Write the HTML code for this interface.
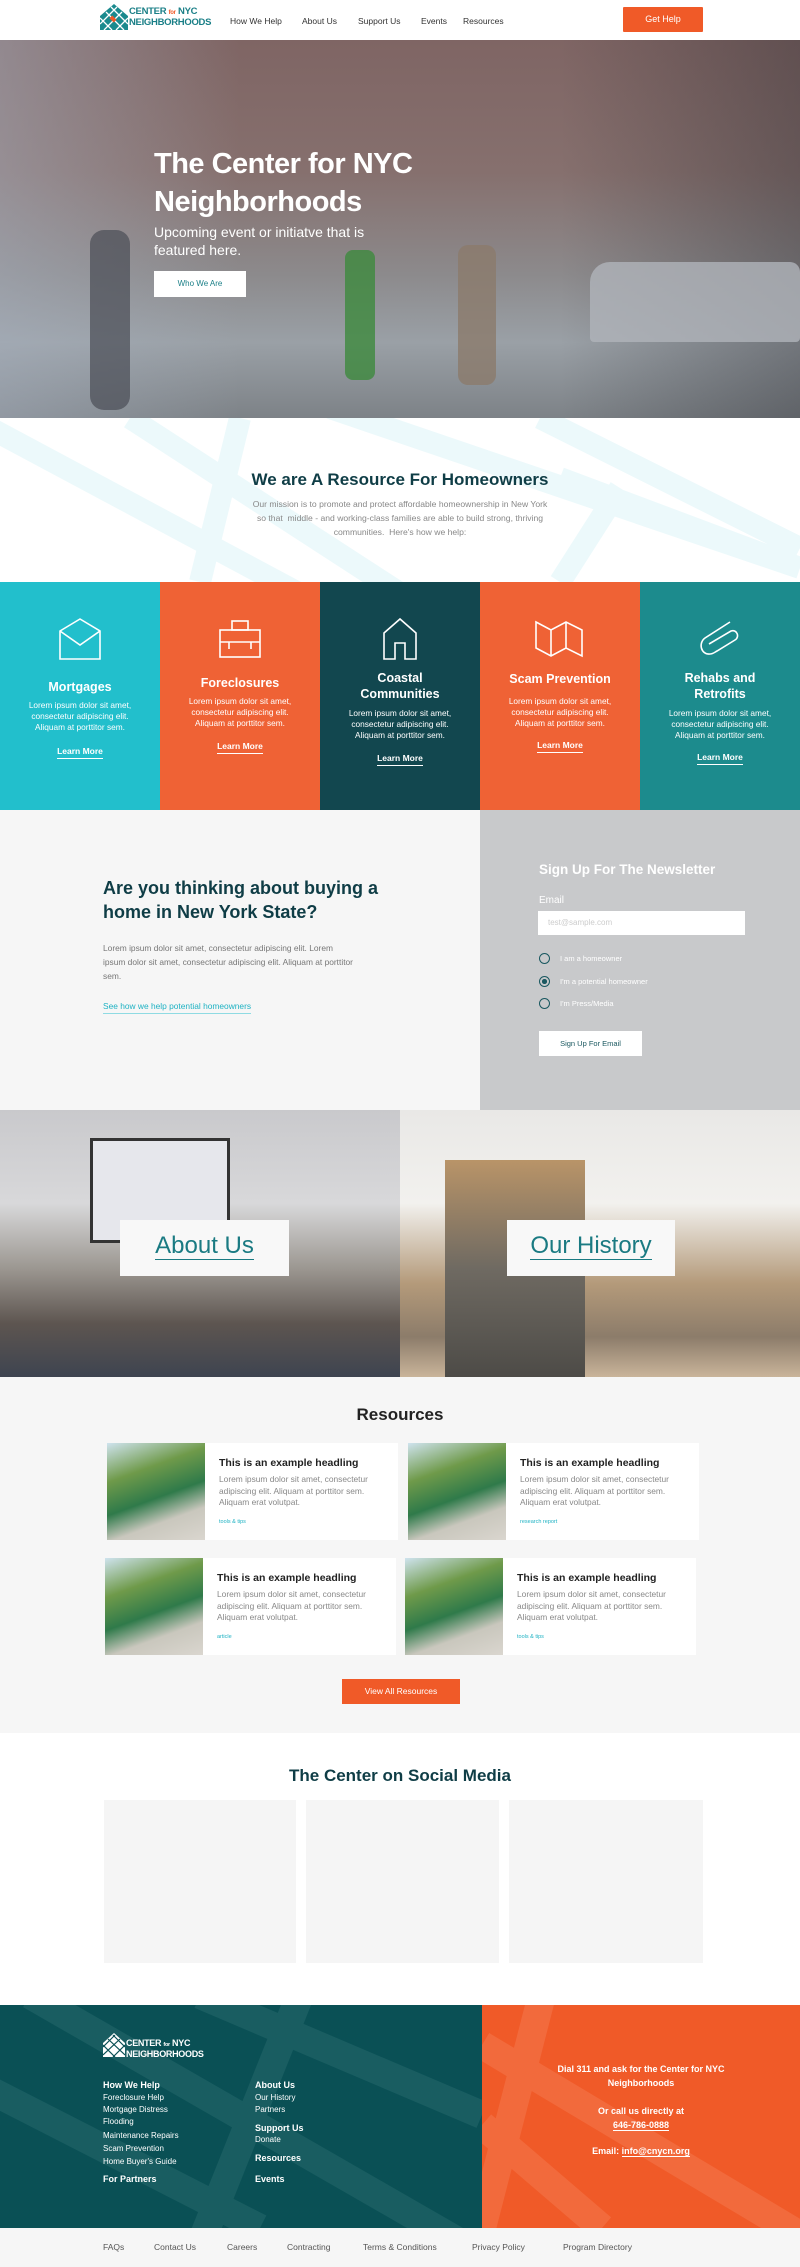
<!DOCTYPE html>
<html><head><meta charset="utf-8"><style>
*{margin:0;padding:0;box-sizing:border-box}
body{width:800px;height:2267px;position:relative;font-family:"Liberation Sans",sans-serif;background:#fff;overflow:hidden}
.a{position:absolute}
.nav{font-size:8.5px;color:#333;top:16px}
.card{position:absolute;top:582px;width:160px;height:228px;text-align:center;color:#fff}
.card h3{position:absolute;left:0;right:0;font-size:12.5px;font-weight:bold;line-height:16px}
.card p{position:absolute;left:0;right:0;font-size:8.3px;line-height:11px}
.card span{position:absolute;left:0;right:0;font-size:8.5px;font-weight:bold}
.card span b{border-bottom:1.5px solid #fff;padding-bottom:2px}
.card svg{position:absolute;left:58px}
.rc{position:absolute;width:291px;height:97px;background:#fff}
.rc .im{position:absolute;left:0;top:0;width:98px;height:97px;background:linear-gradient(160deg,#cfe3ee 0%,#6f9a4a 30%,#2f7a4a 55%,#c9c7bd 75%,#dad6cf 100%)}
.rc h4{position:absolute;left:112px;top:14px;font-size:10.5px;color:#222;font-weight:bold}
.rc p{position:absolute;left:112px;top:31px;width:170px;font-size:8.4px;line-height:11.5px;color:#888}
.rc i{position:absolute;left:112px;top:76px;font-size:5.5px;color:#1fb2c3;font-style:normal}
.soc{position:absolute;top:1800px;height:163px;background:#f5f5f5}
.fl{position:absolute;color:#fff;font-size:8px}
.fb{font-weight:bold;font-size:9px}
.bl{position:absolute;top:2242px;font-size:8.5px;color:#555}
</style></head><body>
<div class="a" style="left:0;top:0;width:800px;height:40px;background:#fff"></div>
<svg class="a" style="left:100px;top:4px" width="28" height="26" viewBox="0 0 28 26"><polygon points="14,0 28,12 28,26 0,26 0,12" fill="#1a8a8e"/><path d="M0 14L12 26M6 8L24 26M11 3L28 20M28 14L16 26M22 8L4 26M17 3L0 20" stroke="#fff" stroke-width="1.3"/><rect x="10" y="13" width="6" height="4" fill="#f05a28" transform="rotate(45 13 15)"/></svg>
<div class="a" style="left:129px;top:7px;font-size:9.5px;font-weight:bold;color:#1a7f87;line-height:10px;letter-spacing:-0.3px">CENTER <span style="color:#f05a28;font-size:6px">for</span> NYC<br>NEIGHBORHOODS</div>
<div class="a nav" style="left:230px">How We Help</div>
<div class="a nav" style="left:302px">About Us</div>
<div class="a nav" style="left:358px">Support Us</div>
<div class="a nav" style="left:421px">Events</div>
<div class="a nav" style="left:463px">Resources</div>
<div class="a" style="left:623px;top:7px;width:80px;height:25px;background:#f05a28;color:#fff;font-size:9px;text-align:center;line-height:25px;border-radius:1px">Get Help</div>
<div class="a" style="left:0;top:40px;width:800px;height:378px;background:linear-gradient(180deg,#7f6564 0%,#86706e 35%,#8c8a8c 62%,#9aa0a6 80%,#7d8287 100%)"></div>
<div class="a" style="left:0;top:40px;width:800px;height:378px;background:linear-gradient(90deg,rgba(170,180,195,.45) 0%,rgba(0,0,0,0) 30%,rgba(0,0,0,0) 70%,rgba(40,40,45,.35) 100%)"></div>
<div class="a" style="left:590px;top:262px;width:210px;height:80px;background:#b0b4ba;border-radius:20px 10px 4px 4px;opacity:.8"></div>
<div class="a" style="left:90px;top:230px;width:40px;height:180px;background:#4a4d55;border-radius:14px;opacity:.7"></div>
<div class="a" style="left:345px;top:250px;width:30px;height:130px;background:#3d8a3d;border-radius:8px;opacity:.8"></div>
<div class="a" style="left:458px;top:245px;width:38px;height:140px;background:#8b7a6c;border-radius:10px;opacity:.8"></div>
<div class="a" style="left:154px;top:145px;font-size:29px;font-weight:bold;color:#fff;line-height:38px;letter-spacing:-0.5px">The Center for NYC<br>Neighborhoods</div>
<div class="a" style="left:154px;top:223px;font-size:14px;color:#fff;line-height:18px">Upcoming event or initiatve that is<br>featured here.</div>
<div class="a" style="left:154px;top:271px;width:92px;height:26px;background:#fff;color:#1a7f87;font-size:8px;text-align:center;line-height:26px">Who We Are</div>
<svg class="a" style="left:0;top:418px" width="800" height="164"><g stroke="#ecf9fb" stroke-width="22" fill="none"><path d="M-10 10L420 240M130 0L500 240M330 -10L800 150M560 60L800 150M540 0L800 130M200 164L240 0M620 70L560 164"/></g></svg>
<div class="a" style="left:0;top:470px;width:800px;text-align:center;font-size:17px;font-weight:bold;color:#0f3d46">We are A Resource For Homeowners</div>
<div class="a" style="left:250px;top:497px;width:300px;text-align:center;font-size:8.6px;line-height:14px;color:#888">Our mission is to promote and protect affordable homeownership in New York so that &nbsp;middle - and working-class families are able to build strong, thriving communities. &nbsp;Here's how we help:</div>
<div class="card" style="left:0;background:#22bfcc">
<svg style="top:35px" width="44" height="44" viewBox="0 0 44 44" fill="none" stroke="#fff" stroke-width="1.6"><path d="M2 14L22 2L42 14V42H2Z"/><path d="M2 14L22 28L42 14"/></svg>
<h3 style="top:97px">Mortgages</h3><p style="top:118px">Lorem ipsum dolor sit amet,<br>consectetur adipiscing elit.<br>Aliquam at porttitor sem.</p><span style="top:164px"><b>Learn More</b></span></div>
<div class="card" style="left:160px;background:#ef6235">
<svg style="top:38px;left:59px" width="42" height="38" viewBox="0 0 42 38" fill="none" stroke="#fff" stroke-width="1.6"><rect x="1" y="10" width="40" height="27"/><rect x="13" y="1" width="16" height="9"/><path d="M1 22H41M10 22V29M32 22V29"/></svg>
<h3 style="top:93px">Foreclosures</h3><p style="top:114px">Lorem ipsum dolor sit amet,<br>consectetur adipiscing elit.<br>Aliquam at porttitor sem.</p><span style="top:159px"><b>Learn More</b></span></div>
<div class="card" style="left:320px;background:#12474f">
<svg style="top:35px;left:58px" width="44" height="44" viewBox="0 0 44 44" fill="none" stroke="#fff" stroke-width="1.6"><path d="M6 42V16L22 2L38 16V42H27V26H17V42Z"/></svg>
<h3 style="top:88px">Coastal<br>Communities</h3><p style="top:126px">Lorem ipsum dolor sit amet,<br>consectetur adipiscing elit.<br>Aliquam at porttitor sem.</p><span style="top:171px"><b>Learn More</b></span></div>
<div class="card" style="left:480px;background:#ef6235">
<svg style="top:38px;left:55px" width="50" height="38" viewBox="0 0 50 38" fill="none" stroke="#fff" stroke-width="1.6"><path d="M1 2L16 10L31 2L47 10V36L31 28L16 36L1 28Z M16 10V36 M31 2V28"/></svg>
<h3 style="top:89px">Scam Prevention</h3><p style="top:114px">Lorem ipsum dolor sit amet,<br>consectetur adipiscing elit.<br>Aliquam at porttitor sem.</p><span style="top:158px"><b>Learn More</b></span></div>
<div class="card" style="left:640px;background:#1c8b8d">
<svg style="top:38px;left:57px" width="44" height="38" viewBox="0 0 44 38" fill="none" stroke="#fff" stroke-width="1.6"><path d="M33 2L8 18C1 23 4 35 13 34C16 34 18 32 20 31L38 20C43 17 40 9 34 11L12 24"/></svg>
<h3 style="top:88px">Rehabs and<br>Retrofits</h3><p style="top:126px">Lorem ipsum dolor sit amet,<br>consectetur adipiscing elit.<br>Aliquam at porttitor sem.</p><span style="top:170px"><b>Learn More</b></span></div>
<div class="a" style="left:0;top:810px;width:480px;height:300px;background:#f6f6f6"></div>
<div class="a" style="left:480px;top:810px;width:320px;height:300px;background:#c8c9cb"></div>
<div class="a" style="left:103px;top:876px;font-size:18px;font-weight:bold;color:#0f3d46;line-height:24px">Are you thinking about buying a<br>home in New York State?</div>
<div class="a" style="left:103px;top:941px;width:250px;font-size:8.4px;line-height:14px;color:#777">Lorem ipsum dolor sit amet, consectetur adipiscing elit. Lorem ipsum dolor sit amet, consectetur adipiscing elit. Aliquam at porttitor sem.</div>
<div class="a" style="left:103px;top:1001px;font-size:8.4px;color:#1fb2c3;border-bottom:1px solid #8fdbe3;padding-bottom:2px">See how we help potential homeowners</div>
<div class="a" style="left:539px;top:862px;font-size:13.5px;font-weight:bold;color:#fff">Sign Up For The Newsletter</div>
<div class="a" style="left:539px;top:895px;font-size:10px;color:#fff">Email</div>
<div class="a" style="left:538px;top:911px;width:207px;height:24px;background:#fff;font-size:8px;color:#ccc;padding:7px 10px">test@sample.com</div>
<div class="a" style="left:539px;top:953px;width:11px;height:11px;border:1.3px solid #1a5860;border-radius:50%"></div>
<div class="a" style="left:539px;top:976px;width:11px;height:11px;border:1.3px solid #1a5860;border-radius:50%;background:radial-gradient(#1a5860 38%,transparent 42%)"></div>
<div class="a" style="left:539px;top:998px;width:11px;height:11px;border:1.3px solid #1a5860;border-radius:50%"></div>
<div class="a" style="left:560px;top:954px;font-size:7.5px;color:#fff">I am a homeowner</div>
<div class="a" style="left:560px;top:977px;font-size:7.5px;color:#fff">I'm a potential homeowner</div>
<div class="a" style="left:560px;top:999px;font-size:7.5px;color:#fff">I'm Press/Media</div>
<div class="a" style="left:539px;top:1031px;width:103px;height:25px;background:#fff;font-size:7.5px;color:#1a5860;text-align:center;line-height:25px">Sign Up For Email</div>
<div class="a" style="left:0;top:1110px;width:400px;height:267px;background:linear-gradient(180deg,#c9c9cc 0%,#d8d8da 35%,#9a958f 60%,#5d5550 80%,#3e4450 100%)"></div>
<div class="a" style="left:90px;top:1138px;width:140px;height:105px;background:#e6e7ec;border:3px solid #333"></div>
<div class="a" style="left:400px;top:1110px;width:400px;height:267px;background:linear-gradient(180deg,#e9e8e6 0%,#f2f1ee 35%,#b49a7a 65%,#8c7c6a 85%,#c9b49a 100%)"></div>
<div class="a" style="left:445px;top:1160px;width:140px;height:217px;background:linear-gradient(180deg,#b99468,#6f6a62 50%,#4d4b47)"></div>
<div class="a" style="left:120px;top:1220px;width:169px;height:56px;background:#f8f8f8;text-align:center;font-size:24px;color:#1a7a82;line-height:52px"><span style="border-bottom:1.5px solid #1a7a82">About Us</span></div>
<div class="a" style="left:507px;top:1220px;width:168px;height:56px;background:#f8f8f8;text-align:center;font-size:24px;color:#1a7a82;line-height:52px"><span style="border-bottom:1.5px solid #1a7a82">Our History</span></div>
<div class="a" style="left:0;top:1377px;width:800px;height:356px;background:#f6f6f6"></div>
<div class="a" style="left:0;top:1405px;width:800px;text-align:center;font-size:17px;font-weight:bold;color:#222">Resources</div>
<div class="rc" style="left:107px;top:1443px"><div class="im"></div><h4>This is an example headling</h4><p>Lorem ipsum dolor sit amet, consectetur adipiscing elit. Aliquam at porttitor sem. Aliquam erat volutpat.</p><i>tools &amp; tips</i></div>
<div class="rc" style="left:408px;top:1443px"><div class="im"></div><h4>This is an example headling</h4><p>Lorem ipsum dolor sit amet, consectetur adipiscing elit. Aliquam at porttitor sem. Aliquam erat volutpat.</p><i>research report</i></div>
<div class="rc" style="left:105px;top:1558px"><div class="im"></div><h4>This is an example headling</h4><p>Lorem ipsum dolor sit amet, consectetur adipiscing elit. Aliquam at porttitor sem. Aliquam erat volutpat.</p><i>article</i></div>
<div class="rc" style="left:405px;top:1558px"><div class="im"></div><h4>This is an example headling</h4><p>Lorem ipsum dolor sit amet, consectetur adipiscing elit. Aliquam at porttitor sem. Aliquam erat volutpat.</p><i>tools &amp; tips</i></div>
<div class="a" style="left:342px;top:1679px;width:118px;height:25px;background:#f05a28;color:#fff;font-size:8.5px;text-align:center;line-height:25px">View All Resources</div>
<div class="a" style="left:0;top:1766px;width:800px;text-align:center;font-size:17px;font-weight:bold;color:#0f3d46">The Center on Social Media</div>
<div class="soc" style="left:104px;width:192px"></div>
<div class="soc" style="left:306px;width:193px"></div>
<div class="soc" style="left:509px;width:194px"></div>
<div class="a" style="left:0;top:2005px;width:482px;height:223px;background:#0a5055;overflow:hidden"><svg width="482" height="223"><g stroke="#195d61" stroke-width="28" fill="none"><path d="M30 -10L482 250M-20 80L260 223M300 -10L200 240M200 -10L482 110"/></g></svg></div>
<div class="a" style="left:482px;top:2005px;width:318px;height:223px;background:#f05a28;overflow:hidden"><svg width="318" height="223"><g stroke="#f26a3c" stroke-width="28" fill="none"><path d="M0 40L318 230M60 -10L0 223M0 120L120 223"/></g></svg></div>
<svg class="a" style="left:103px;top:2033px" width="22" height="24" viewBox="0 0 22 24"><polygon points="11,0 22,10 22,24 0,24 0,10" fill="#fff"/><path d="M0 12L12 24M5 6L22 22M10 2L22 14M22 12L10 24M17 6L0 22M12 2L0 14" stroke="#0a5055" stroke-width="1.2"/></svg>
<div class="a" style="left:126px;top:2039px;font-size:9px;font-weight:bold;color:#fff;line-height:9px;letter-spacing:-0.3px">CENTER <span style="font-size:5.5px">for</span> NYC<br>NEIGHBORHOODS</div>
<div class="fl fb" style="left:103px;top:2080px">How We Help</div>
<div class="fl" style="left:103px;top:2093px">Foreclosure Help</div>
<div class="fl" style="left:103px;top:2105px">Mortgage Distress</div>
<div class="fl" style="left:103px;top:2117px">Flooding</div>
<div class="fl" style="left:103px;top:2131px">Maintenance Repairs</div>
<div class="fl" style="left:103px;top:2144px">Scam Prevention</div>
<div class="fl" style="left:103px;top:2157px">Home Buyer's Guide</div>
<div class="fl fb" style="left:103px;top:2174px">For Partners</div>
<div class="fl fb" style="left:255px;top:2080px">About Us</div>
<div class="fl" style="left:255px;top:2093px">Our History</div>
<div class="fl" style="left:255px;top:2105px">Partners</div>
<div class="fl fb" style="left:255px;top:2123px">Support Us</div>
<div class="fl" style="left:255px;top:2135px">Donate</div>
<div class="fl fb" style="left:255px;top:2153px">Resources</div>
<div class="fl fb" style="left:255px;top:2174px">Events</div>
<div class="fl fb" style="left:482px;top:2062px;width:318px;text-align:center;line-height:14px">Dial 311 and ask for the Center for NYC<br>Neighborhoods</div>
<div class="fl fb" style="left:482px;top:2104px;width:318px;text-align:center;line-height:14px">Or call us directly at<br><span style="border-bottom:1.2px solid #fff">646-786-0888</span></div>
<div class="fl fb" style="left:482px;top:2146px;width:318px;text-align:center">Email: <span style="border-bottom:1.2px solid #fff">info@cnycn.org </span></div>
<div class="a" style="left:0;top:2228px;width:800px;height:39px;background:#f6f6f6"></div>
<div class="bl" style="left:103px">FAQs</div>
<div class="bl" style="left:154px">Contact Us</div>
<div class="bl" style="left:227px">Careers</div>
<div class="bl" style="left:287px">Contracting</div>
<div class="bl" style="left:363px">Terms &amp; Conditions</div>
<div class="bl" style="left:472px">Privacy Policy</div>
<div class="bl" style="left:563px">Program Directory</div>
</body></html>
